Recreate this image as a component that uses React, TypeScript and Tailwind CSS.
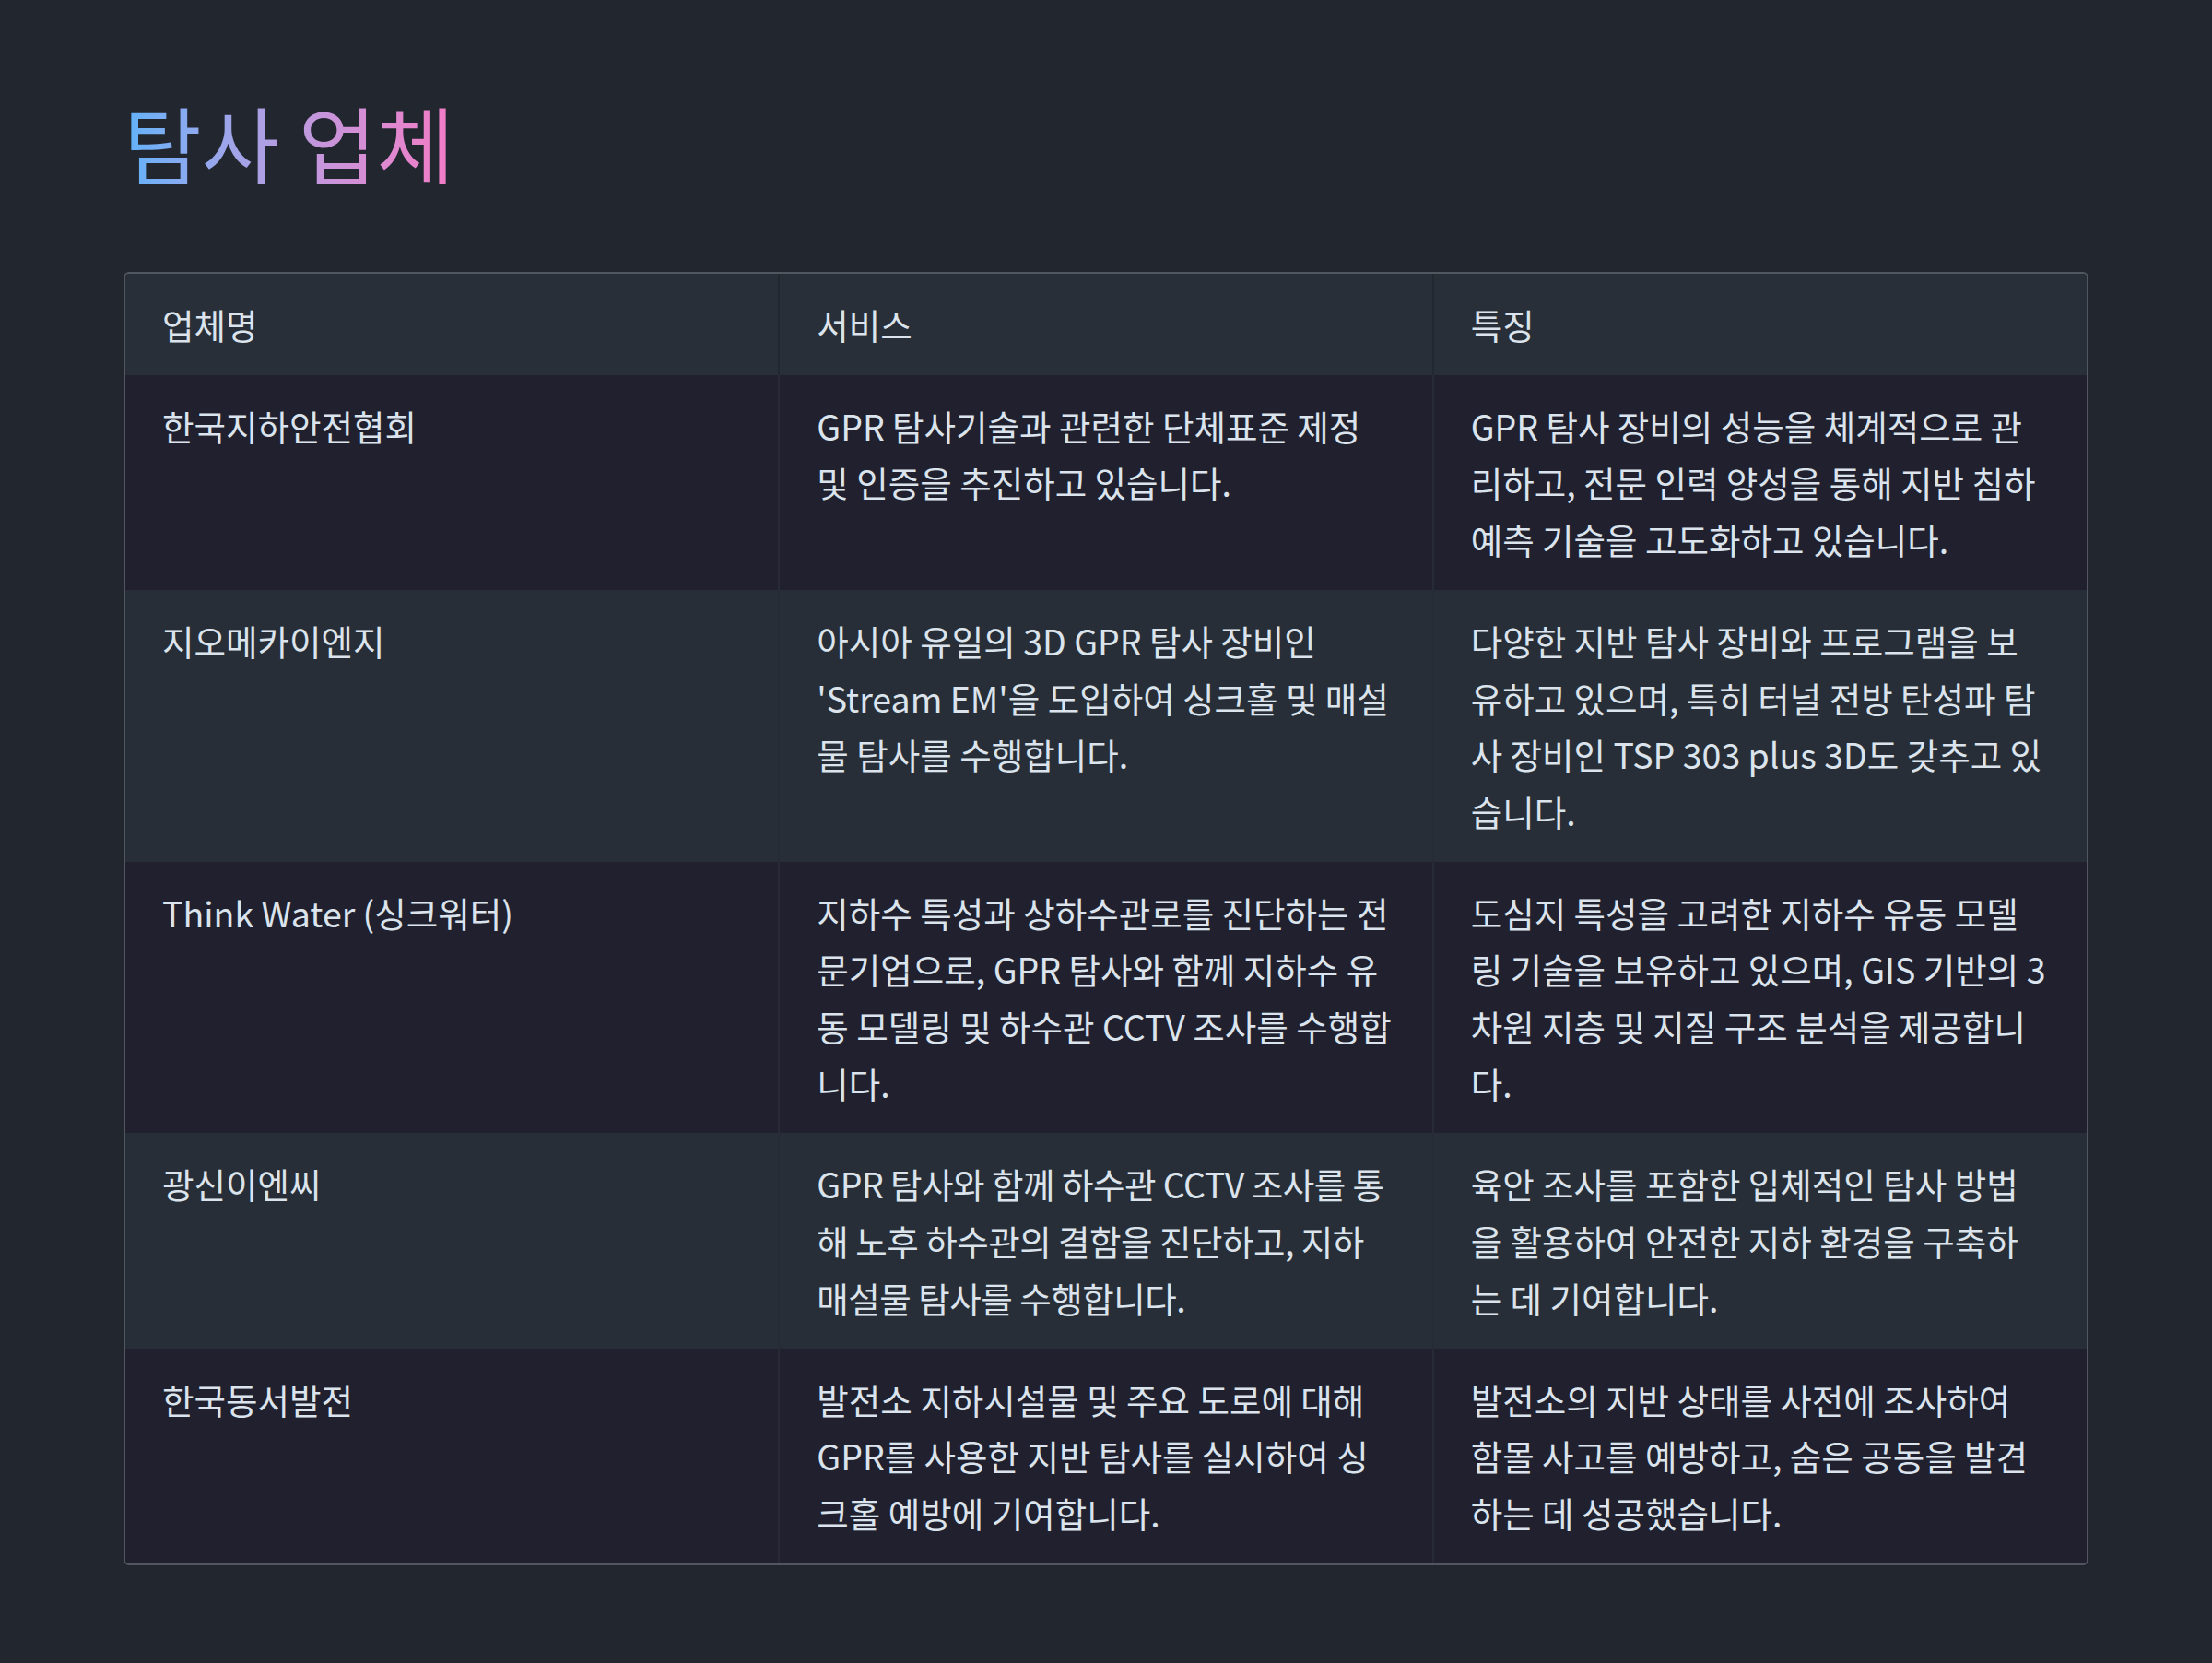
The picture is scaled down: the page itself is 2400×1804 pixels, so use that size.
const rows = [
  {
    name: "한국지하안전협회",
    service: "GPR 탐사기술과 관련한 단체표준 제정 및 인증을 추진하고 있습니다.",
    feature: "GPR 탐사 장비의 성능을 체계적으로 관리하고, 전문 인력 양성을 통해 지반 침하 예측 기술을 고도화하고 있습니다.",
  },
  {
    name: "지오메카이엔지",
    service: "아시아 유일의 3D GPR 탐사 장비인 'Stream EM'을 도입하여 싱크홀 및 매설물 탐사를 수행합니다.",
    feature: "다양한 지반 탐사 장비와 프로그램을 보유하고 있으며, 특히 터널 전방 탄성파 탐사 장비인 TSP 303 plus 3D도 갖추고 있습니다.",
  },
  {
    name: "Think Water (싱크워터)",
    service: "지하수 특성과 상하수관로를 진단하는 전문기업으로, GPR 탐사와 함께 지하수 유동 모델링 및 하수관 CCTV 조사를 수행합니다.",
    feature: "도심지 특성을 고려한 지하수 유동 모델링 기술을 보유하고 있으며, GIS 기반의 3차원 지층 및 지질 구조 분석을 제공합니다.",
  },
  {
    name: "광신이엔씨",
    service: "GPR 탐사와 함께 하수관 CCTV 조사를 통해 노후 하수관의 결함을 진단하고, 지하 매설물 탐사를 수행합니다.",
    feature: "육안 조사를 포함한 입체적인 탐사 방법을 활용하여 안전한 지하 환경을 구축하는 데 기여합니다.",
    tightService: true,
  },
  {
    name: "한국동서발전",
    service: "발전소 지하시설물 및 주요 도로에 대해 GPR를 사용한 지반 탐사를 실시하여 싱크홀 예방에 기여합니다.",
    feature: "발전소의 지반 상태를 사전에 조사하여 함몰 사고를 예방하고, 숨은 공동을 발견하는 데 성공했습니다.",
  },
];

const cell = "align-top px-[40px] py-[24px] text-[37.5px] leading-[61.7px] text-[#dbe4ec] font-normal text-left";

export default function App() {
  return (
    <div
      className="min-h-[1804px] bg-[#22272f] px-[134px] pt-[108px] pb-[108px]"
      style={{ fontFamily: '"Noto Sans CJK KR", "Noto Sans", sans-serif' }}
    >
      <h1 className="text-[92px] leading-none font-normal bg-gradient-to-r from-[#5fb2fa] to-[#f47ac6] bg-clip-text text-transparent w-fit mb-[95px]">
        탐사 업체
      </h1>
      <div className="border-2 border-[#51565f] rounded-md overflow-hidden">
        <table className="w-full table-fixed border-collapse">
          <thead>
            <tr className="bg-[#292f38]">
              <th className={cell}>업체명</th>
              <th className={`${cell} border-l-2 border-[#232830]`}>서비스</th>
              <th className={`${cell} border-l-2 border-[#232830]`}>특징</th>
            </tr>
          </thead>
          <tbody>
            {rows.map((r, i) => (
              <tr key={r.name} className={i % 2 === 0 ? "bg-[#20202f]" : "bg-[#282e37]"}>
                <td className={cell}>{r.name}</td>
                <td className={`${cell} border-l-2 border-[#262b35] ${r.tightService ? "tracking-[-0.5px]" : ""}`}>
                  {r.service}
                </td>
                <td className={`${cell} border-l-2 border-[#262b35]`}>{r.feature}</td>
              </tr>
            ))}
          </tbody>
        </table>
      </div>
    </div>
  );
}
